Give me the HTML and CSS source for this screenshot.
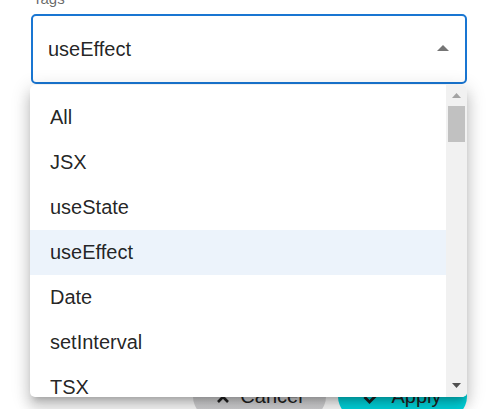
FILE: index.html
```html
<!DOCTYPE html>
<html>
<head>
<meta charset="utf-8">
<link rel="stylesheet" href="styles.css">
</head>
<body>
<div class="page">
  <div class="field">
    <label class="label">Tags</label>
    <div class="select">
      <span class="value">useEffect</span>
      <svg class="caret" width="12" height="6" viewBox="0 0 12 6"><path d="M0 6 L6 0 L12 6 Z" fill="#757575"/></svg>
    </div>
  </div>
  <div class="actions">
    <button class="btn cancel">
      <svg width="14" height="14" viewBox="0 0 14 14"><path d="M2 2 L12 12 M12 2 L2 12" stroke="#222" stroke-width="2.6"/></svg>
      <span>Cancel</span>
    </button>
    <button class="btn apply">
      <svg width="18" height="14" viewBox="0 0 18 14"><path d="M1.5 7 L6.5 12 L16.5 2" fill="none" stroke="#222" stroke-width="2.8"/></svg>
      <span>Apply</span>
    </button>
  </div>

  <div class="menu">
    <ul class="list">
      <li class="item">All</li>
      <li class="item">JSX</li>
      <li class="item">useState</li>
      <li class="item selected">useEffect</li>
      <li class="item">Date</li>
      <li class="item">setInterval</li>
      <li class="item">TSX</li>
    </ul>
    <div class="scrollbar">
      <div class="arrow up"><svg width="9" height="5" viewBox="0 0 9 5"><path d="M0 5 L4.5 0 L9 5 Z" fill="#a3a3a3"/></svg></div>
      <div class="track"><div class="thumb"></div></div>
      <div class="arrow down"><svg width="9" height="5" viewBox="0 0 9 5"><path d="M0 0 L4.5 5 L9 0 Z" fill="#505050"/></svg></div>
    </div>
  </div>
</div>
</body>
</html>
```

FILE: styles.css
```css
* { box-sizing: border-box; }
html, body { margin: 0; padding: 0; background: #fff; }
body {
  font-family: "Liberation Sans", Arial, sans-serif;
  color: rgba(0,0,0,0.87);
  overflow: hidden;
  width: 493px;
  height: 409px;
}
.page {
  position: relative;
  display: flow-root;
  width: 493px;
  height: 409px;
}
.field {
  padding-left: 31px;
  padding-right: 26px;
}
.label {
  display: block;
  font-size: 15px;
  line-height: 18px;
  color: rgba(0,0,0,0.6);
  margin-top: -10px;
  margin-left: 2px;
  height: 24px;
}
.select {
  height: 70px;
  border: 2px solid #1976d2;
  border-radius: 5px;
  display: flex;
  align-items: center;
  justify-content: space-between;
  padding: 0 16px 0 15px;
  font-size: 20px;
}
.value { line-height: 24px; margin-top: -1px; }
.caret { margin-right: 0; margin-top: -2px; }

.actions {
  display: flex;
  justify-content: flex-end;
  gap: 12px;
  padding-right: 26px;
  margin-top: 290px;
}
.btn {
  height: 45px;
  border: none;
  border-radius: 23px;
  display: flex;
  align-items: center;
  justify-content: center;
  gap: 10px;
  font-family: "Liberation Sans", Arial, sans-serif;
  font-size: 20px;
  color: #222;
  padding: 0;
}
.cancel {
  width: 133px;
  background: linear-gradient(#e6e6e6, #cfcfd2);
}
.apply {
  width: 129px;
  background: #00d9e1;
}

.menu {
  position: absolute;
  left: 30px;
  top: 85px;
  width: 437px;
  height: 312px;
  background: #fff;
  border-radius: 5px;
  overflow: hidden;
  display: flex;
  box-shadow: 0 6px 6px -4px rgba(0,0,0,0.2), 0 10px 13px 1px rgba(0,0,0,0.14), 0 4px 18px 3px rgba(0,0,0,0.12);
}
.list {
  list-style: none;
  margin: 0;
  padding: 10px 0 0 0;
  flex: 1;
  overflow: hidden;
}
.item {
  height: 45px;
  line-height: 45px;
  padding-left: 20px;
  font-size: 20px;
  color: rgba(0,0,0,0.87);
}
.item.selected { background: #ecf3fb; }
.scrollbar {
  width: 21px;
  background: #f1f1f1;
  display: flex;
  flex-direction: column;
}
.arrow {
  height: 21px;
  display: flex;
  align-items: center;
  justify-content: center;
}
.arrow.up { align-items: flex-start; padding-top: 8px; }
.arrow.down { align-items: flex-end; padding-bottom: 9px; }
.track { flex: 1; padding: 0 2px; }
.thumb {
  height: 36px;
  background: #c1c1c1;
}
```
